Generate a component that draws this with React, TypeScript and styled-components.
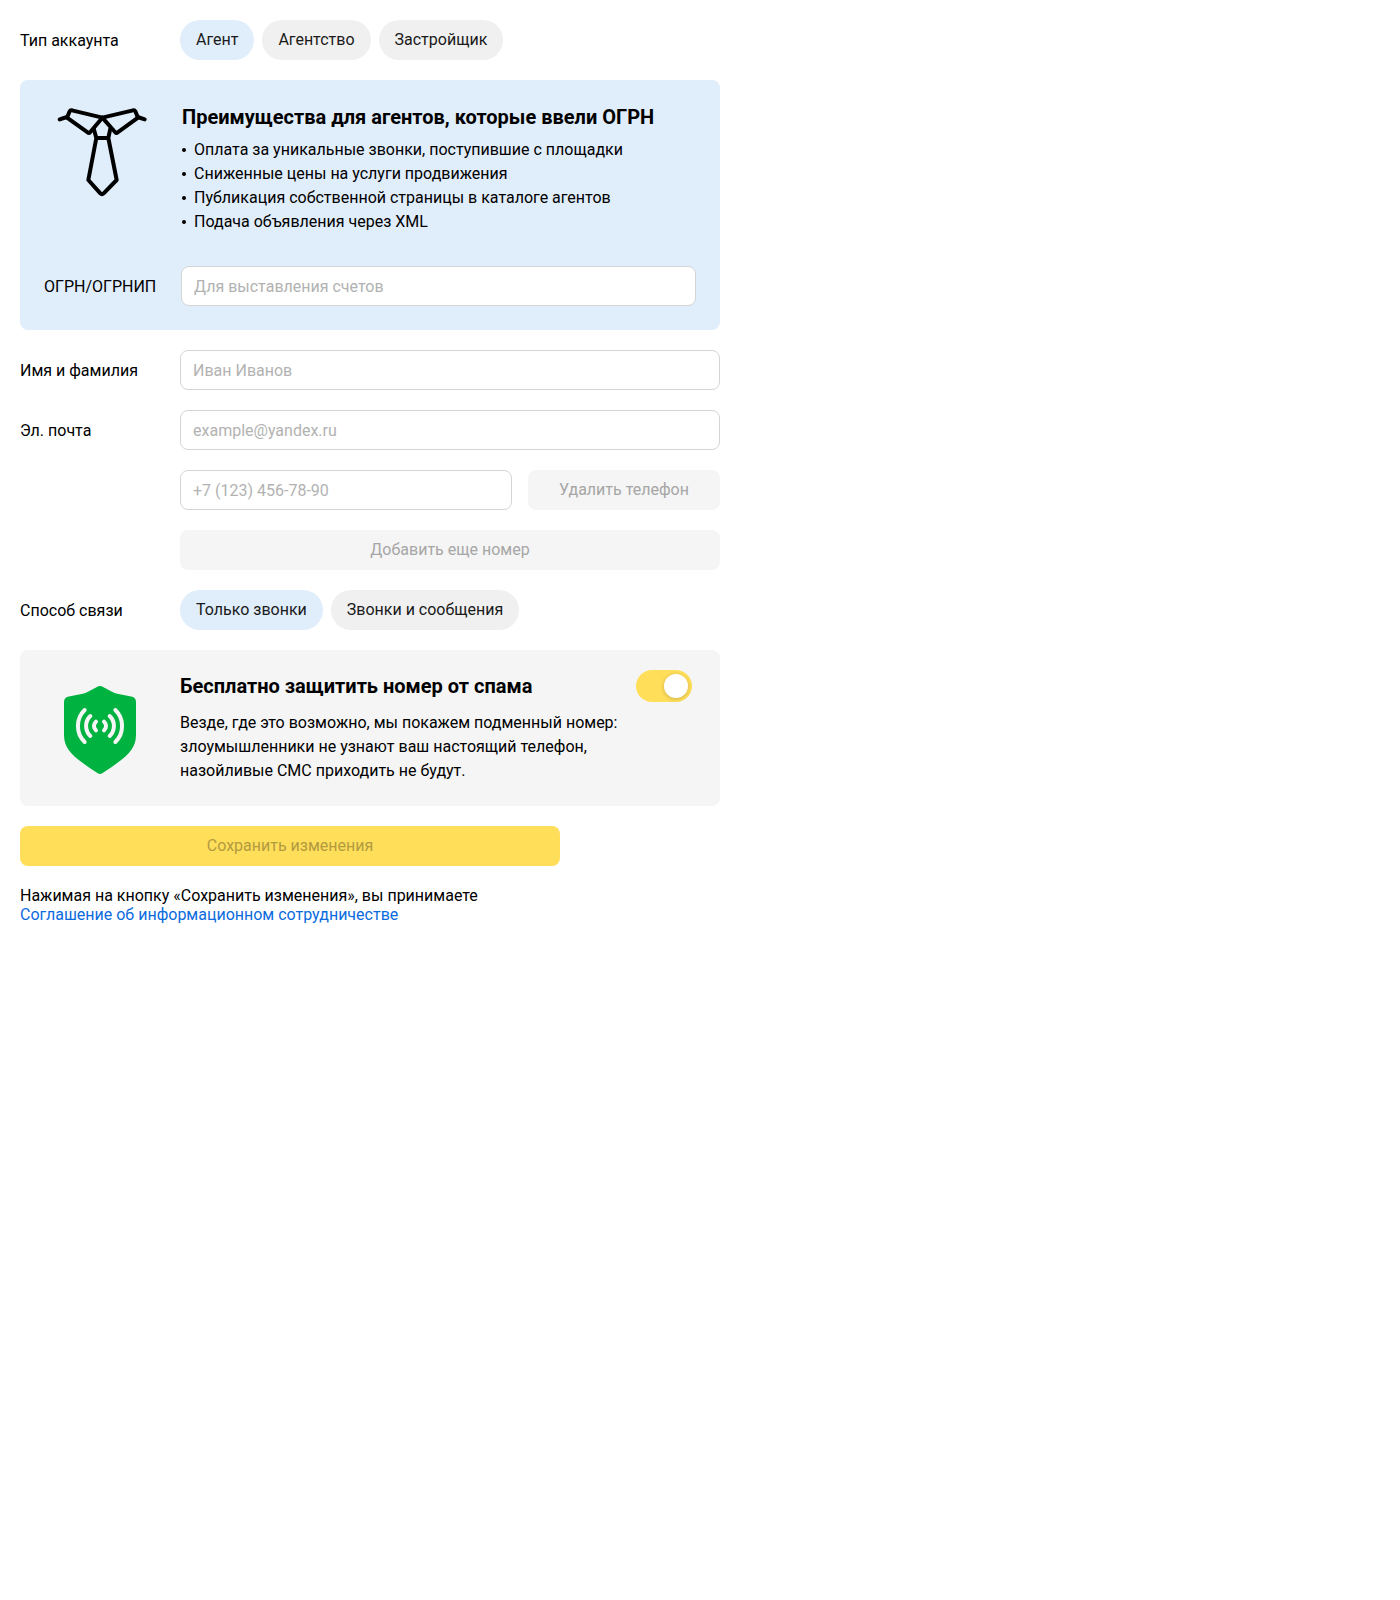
import React, { useState } from 'react';
import styled, { createGlobalStyle, css } from 'styled-components';

const GlobalStyle = createGlobalStyle`
  *, *::before, *::after { box-sizing: border-box; }
  body {
    margin: 0;
    background: #fff;
    color: #000;
    font: 16px/20px Roboto, "Noto Sans", sans-serif;
  }
  button, input { font: inherit; }
`;

const Page = styled.form`
  display: flex;
  flex-direction: column;
  gap: 20px;
  max-width: 740px;
  padding: 20px;
`;

const Row = styled.div<{ $label?: number }>`
  display: grid;
  grid-template-columns: ${(p) => p.$label ?? 160}px minmax(0, 1fr);
  align-items: center;
`;

const Label = styled.label`
  padding-top: 2px;
`;

const GroupName = styled.span`
  padding-top: 2px;
`;

const Field = styled.div`
  grid-column: 2;
  display: flex;
  gap: 16px;
`;

const Pills = styled.div`
  display: flex;
  gap: 8px;
`;

const Pill = styled.button<{ $active: boolean }>`
  height: 40px;
  padding: 0 16px;
  border: 0;
  border-radius: 20px;
  background: ${(p) => (p.$active ? '#e0edfb' : '#f0f0f0')};
  color: #1a1a1a;
  cursor: pointer;
`;

const TextInput = styled.input`
  flex: 1;
  min-width: 0;
  width: 100%;
  height: 40px;
  padding: 0 12px;
  border: 1px solid #d5d5d5;
  border-radius: 8px;
  background: #fff;
  color: #000;
  &::placeholder { color: #b2b2b2; opacity: 1; }
`;

const tones = {
  grey: css`background: #f5f5f5; color: #a6a6a6;`,
  yellow: css`background: #ffde5a; color: #b29b3f;`,
};

const Button = styled.button<{ $tone?: keyof typeof tones; $width?: string }>`
  width: ${(p) => p.$width ?? '100%'};
  max-width: 100%;
  height: 40px;
  padding: 0 16px;
  border: 0;
  border-radius: 8px;
  ${(p) => tones[p.$tone ?? 'grey']}
`;

const Benefits = styled.section`
  padding: 24px;
  border-radius: 8px;
  background: #e0edfb;
`;

const BenefitsTop = styled.div`
  display: grid;
  grid-template-columns: 138px minmax(0, 1fr);
  margin-bottom: 32px;
`;

const TieBox = styled.div`
  padding: 4px 14px;
`;

const Icon = styled.svg`
  display: block;
  width: 88px;
  height: 88px;
  overflow: visible;
`;

const Title = styled.h2`
  margin: 0;
  font-size: 20px;
  line-height: 26px;
  font-weight: 700;
`;

const List = styled.ul`
  margin: 8px 0 0;
  padding: 0;
  list-style: none;
  line-height: 24px;
`;

const Item = styled.li`
  display: flex;
  align-items: center;
  gap: 8px;
  &::before {
    content: '';
    width: 4px;
    height: 4px;
    border-radius: 50%;
    background: #000;
  }
`;

const Protect = styled.section`
  display: grid;
  grid-template-columns: 124px minmax(0, 1fr) auto;
  padding: 20px 28px 20px 36px;
  border-radius: 8px;
  background: #f5f5f5;
`;

const ShieldBox = styled.div`
  padding-top: 16px;
`;

const ProtectText = styled.div`
  padding: 3px 0;
`;

const Paragraph = styled.p`
  max-width: 448px;
  margin: 12px 0 0;
  line-height: 24px;
`;

const Switch = styled.input`
  appearance: none;
  display: flex;
  align-items: center;
  width: 56px;
  height: 32px;
  margin: 0;
  padding: 4px;
  border-radius: 16px;
  background: #d5d5d5;
  cursor: pointer;
  &::before {
    content: '';
    width: 24px;
    height: 24px;
    border-radius: 50%;
    background: #fff;
    box-shadow: 0 1px 4px rgba(0, 0, 0, 0.2);
  }
  &:checked {
    justify-content: flex-end;
    background: #ffde5a;
  }
`;

const Terms = styled.p`
  margin: 0;
  line-height: 19px;
`;

const Link = styled.a`
  display: block;
  color: #0b6bde;
  text-decoration: none;
`;

function TieIcon() {
  return (
    <Icon viewBox="54 54 264 264" fill="none" stroke="#000" strokeWidth="12" strokeLinecap="round" strokeLinejoin="round" aria-hidden="true">
      <path d="M59 88 81 81M314 88 293 81" />
      <path d="M187 83 96 61Q91 60 89 64L81 83 143 127Q147 131 151 126L187 83" />
      <path d="M187 83 279 61Q284 60 286 64L294 83 233 127Q229 131 225 126L187 83" />
      <path d="M161 116 169 144H205L211 116M169 144 145 270 181 310Q186 316 191 310L230 270 205 144" />
    </Icon>
  );
}

function ShieldIcon() {
  return (
    <Icon viewBox="48 48 264 264" fill="none" aria-hidden="true">
      <path
        fill="#00b341"
        d="M175 49Q180 47 185 49L216 65Q224 69 232 71L277 80Q288 84 288 96V194C288 238 262 260 188 309Q180 315 172 309C98 260 72 238 72 194V96Q72 84 83 80L128 71Q136 69 144 65Z"
      />
      <g stroke="#f5f5f5" strokeWidth="12" strokeLinecap="round">
        <path d="M134 120C107 146 107 190 134 216M151 138C134 154 134 182 151 198M168 155C160 163 160 173 168 181" />
        <path d="M226 120C253 146 253 190 226 216M209 138C226 154 226 182 209 198M192 155C200 163 200 173 192 181" />
      </g>
    </Icon>
  );
}

interface ChoiceProps {
  id: string;
  name: string;
  options: string[];
}

function Choice({ id, name, options }: ChoiceProps) {
  const [selected, setSelected] = useState(options[0]);
  return (
    <Row>
      <GroupName id={id}>{name}</GroupName>
      <Pills role="group" aria-labelledby={id}>
        {options.map((option) => (
          <Pill
            key={option}
            type="button"
            $active={option === selected}
            aria-pressed={option === selected}
            onClick={() => setSelected(option)}
          >
            {option}
          </Pill>
        ))}
      </Pills>
    </Row>
  );
}

const benefits = [
  'Оплата за уникальные звонки, поступившие с площадки',
  'Сниженные цены на услуги продвижения',
  'Публикация собственной страницы в каталоге агентов',
  'Подача объявления через XML',
];

export default function App() {
  return (
    <>
      <GlobalStyle />
      <Page onSubmit={(e) => e.preventDefault()}>
        <Choice id="account-type" name="Тип аккаунта" options={['Агент', 'Агентство', 'Застройщик']} />

        <Benefits>
          <BenefitsTop>
            <TieBox>
              <TieIcon />
            </TieBox>
            <div>
              <Title>Преимущества для агентов, которые ввели ОГРН</Title>
              <List>
                {benefits.map((text) => (
                  <Item key={text}>{text}</Item>
                ))}
              </List>
            </div>
          </BenefitsTop>
          <Row $label={137}>
            <Label htmlFor="ogrn">ОГРН/ОГРНИП</Label>
            <TextInput id="ogrn" placeholder="Для выставления счетов" />
          </Row>
        </Benefits>

        <Row>
          <Label htmlFor="name">Имя и фамилия</Label>
          <TextInput id="name" placeholder="Иван Иванов" />
        </Row>
        <Row>
          <Label htmlFor="email">Эл. почта</Label>
          <TextInput id="email" type="email" placeholder="example@yandex.ru" />
        </Row>
        <Row>
          <Field>
            <TextInput type="tel" aria-label="Телефон" placeholder="+7 (123) 456-78-90" />
            <Button type="button" $width="192px" disabled>
              Удалить телефон
            </Button>
          </Field>
        </Row>
        <Row>
          <Field>
            <Button type="button" disabled>
              Добавить еще номер
            </Button>
          </Field>
        </Row>

        <Choice id="contact-way" name="Способ связи" options={['Только звонки', 'Звонки и сообщения']} />

        <Protect>
          <ShieldBox>
            <ShieldIcon />
          </ShieldBox>
          <ProtectText>
            <Title id="protect-title">Бесплатно защитить номер от спама</Title>
            <Paragraph>
              Везде, где это возможно, мы покажем подменный номер: злоумышленники не узнают ваш настоящий телефон,
              назойливые СМС приходить не будут.
            </Paragraph>
          </ProtectText>
          <Switch type="checkbox" role="switch" aria-labelledby="protect-title" defaultChecked />
        </Protect>

        <Button type="submit" $tone="yellow" $width="540px" disabled>
          Сохранить изменения
        </Button>

        <Terms>
          Нажимая на кнопку «Сохранить изменения», вы принимаете
          <Link href="#terms">Соглашение об информационном сотрудничестве</Link>
        </Terms>
      </Page>
    </>
  );
}
